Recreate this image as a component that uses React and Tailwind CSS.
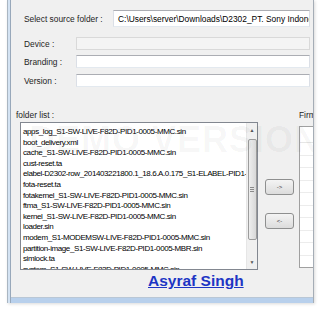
import React from 'react';

const files = [
  'apps_log_S1-SW-LIVE-F82D-PID1-0005-MMC.sin',
  'boot_delivery.xml',
  'cache_S1-SW-LIVE-F82D-PID1-0005-MMC.sin',
  'cust-reset.ta',
  'elabel-D2302-row_201403221800.1_18.6.A.0.175_S1-ELABEL-PID1-0005-MMC.sin',
  'fota-reset.ta',
  'fotakernel_S1-SW-LIVE-F82D-PID1-0005-MMC.sin',
  'ftma_S1-SW-LIVE-F82D-PID1-0005-MMC.sin',
  'kernel_S1-SW-LIVE-F82D-PID1-0005-MMC.sin',
  'loader.sin',
  'modem_S1-MODEMSW-LIVE-F82D-PID1-0005-MMC.sin',
  'partition-image_S1-SW-LIVE-F82D-PID1-0005-MBR.sin',
  'simlock.ta',
  'system_S1-SW-LIVE-F82D-PID1-0005-MMC.sin',
];

const Field = ({ label, labelWidth, value, disabled, className }) => (
  <div className={'flex items-center min-w-0 ' + className}>
    <div className="ml-[13px] shrink-0 text-[#1e1e1e] whitespace-nowrap" style={{ width: labelWidth }}>
      {label}
    </div>
    <div
      className={
        'flex-1 min-w-0 mr-[3px] h-full flex items-center pl-[4px] overflow-hidden whitespace-nowrap border ' +
        (disabled ? 'bg-[#f4f4f4] border-[#d9d9d9]' : 'bg-white border-t-[#abadb3] border-x-[#dbdfe6] border-b-[#e3e9ef]')
      }
    >
      {value}
    </div>
  </div>
);

const SmallButton = ({ children, className }) => (
  <div
    className={
      'w-[29px] h-[16px] ml-[7px] rounded-[3px] border border-[#8e8f8f] bg-gradient-to-b from-[#f4f4f4] to-[#dcdcdc] flex items-center justify-center text-[6px] text-[#333] ' +
      className
    }
  >
    {children}
  </div>
);

export default function App() {
  return (
    <div
      className="w-[320px] h-[309px] bg-white overflow-hidden relative text-[8.4px] leading-[10px]"
      style={{ fontFamily: '"Liberation Sans", Arial, sans-serif' }}
    >
      <div className="ml-[7px] w-[307px] h-[303px] flex shadow-[1px_1px_3px_rgba(0,0,0,0.15)]">
        <div className="w-[1px] shrink-0 bg-[#aab6c2]" />
        <div className="w-[2px] shrink-0 bg-[#d4e3f3]" />
        <div className="w-[1px] shrink-0 bg-[#98a8ba]" />
        <div className="flex-1 min-w-0 overflow-hidden flex flex-col bg-[#f0f0f0] border-r border-[#a5adb6]">
          <div className="h-[297px] flex flex-col pt-[10px] relative">
            <Field
              label="Select source folder :"
              labelWidth={89}
              value="C:\Users\server\Downloads\D2302_PT. Sony Indonesia"
              className="h-[17px]"
            />
            <Field label="Device :" labelWidth={52} value="" disabled className="h-[13px] mt-[10px]" />
            <Field label="Branding :" labelWidth={52} value="" className="h-[13px] mt-[5px]" />
            <Field label="Version :" labelWidth={52} value="" className="h-[13px] mt-[6px]" />

            <div className="flex mt-[23px] min-w-0">
              <div className="ml-[5px] shrink-0 flex flex-col">
                <div className="h-[10px] text-[#1e1e1e]">folder list :</div>
                <div className="mt-[2px] ml-[4px] w-[238px] h-[148px] bg-white border border-[#828790] flex overflow-hidden">
                  <div className="flex-1 min-w-0 overflow-hidden pl-[2px] pt-[4px] text-black text-[8px]">
                    {files.map((f) => (
                      <div key={f} className="h-[10.6px] leading-[10.6px] whitespace-nowrap tracking-[-0.4px]">
                        {f}
                      </div>
                    ))}
                  </div>
                  <div className="w-[11px] shrink-0 bg-[#f0f0f0] flex flex-col items-center border-l border-[#e6e6e6]">
                    <div className="h-[14px] flex items-center justify-center text-[5px] text-[#555]">▲</div>
                    <div className="mt-[2px] w-[9px] h-[101px] rounded-[2px] border border-[#9c9c9c] bg-gradient-to-r from-[#eeeeee] to-[#d8d8d8] flex items-center justify-center">
                      <div className="flex flex-col gap-[1px]">
                        <div className="w-[4px] h-[1px] bg-[#8a8a8a]" />
                        <div className="w-[4px] h-[1px] bg-[#8a8a8a]" />
                        <div className="w-[4px] h-[1px] bg-[#8a8a8a]" />
                      </div>
                    </div>
                    <div className="flex-1" />
                    <div className="h-[14px] flex items-center justify-center text-[5px] text-[#555]">▼</div>
                  </div>
                </div>
              </div>

              <div className="w-[41px] shrink-0 flex flex-col">
                <SmallButton className="mt-[69px]">-&gt;</SmallButton>
                <SmallButton className="mt-[18px]">&lt;-</SmallButton>
              </div>

              <div className="flex-1 min-w-0 flex flex-col overflow-hidden">
                <div className="h-[10px] whitespace-nowrap text-[#1e1e1e]">Firmware list :</div>
                <div className="mt-[6px] h-[142px] bg-white border border-r-0 border-[#a0a0a0] flex flex-col overflow-hidden">
                  <div className="h-[16px] shrink-0 border-b border-[#e6e6e6]" />
                  {Array.from({ length: 10 }).map((_, i) => (
                    <div key={i} className="h-[12.5px] shrink-0 border-b border-[#ececec]" />
                  ))}
                </div>
              </div>
            </div>

            <div className="mt-[2px] pl-[137px] h-[18px] flex items-center">
              <span className="text-[15.5px] font-bold underline text-[#1d35c4] leading-[18px]">
                Asyraf Singh
              </span>
            </div>

            <div className="absolute left-[18px] top-[122px] pointer-events-none whitespace-nowrap text-[36px] leading-none font-bold text-black/[0.035] tracking-[1px]">
              DEMO VERSION
            </div>
          </div>
          <div className="h-[1px] bg-[#b9c7d6]" />
          <div className="h-[5px] bg-[#b8d0ec]" />
        </div>
      </div>
    </div>
  );
}
